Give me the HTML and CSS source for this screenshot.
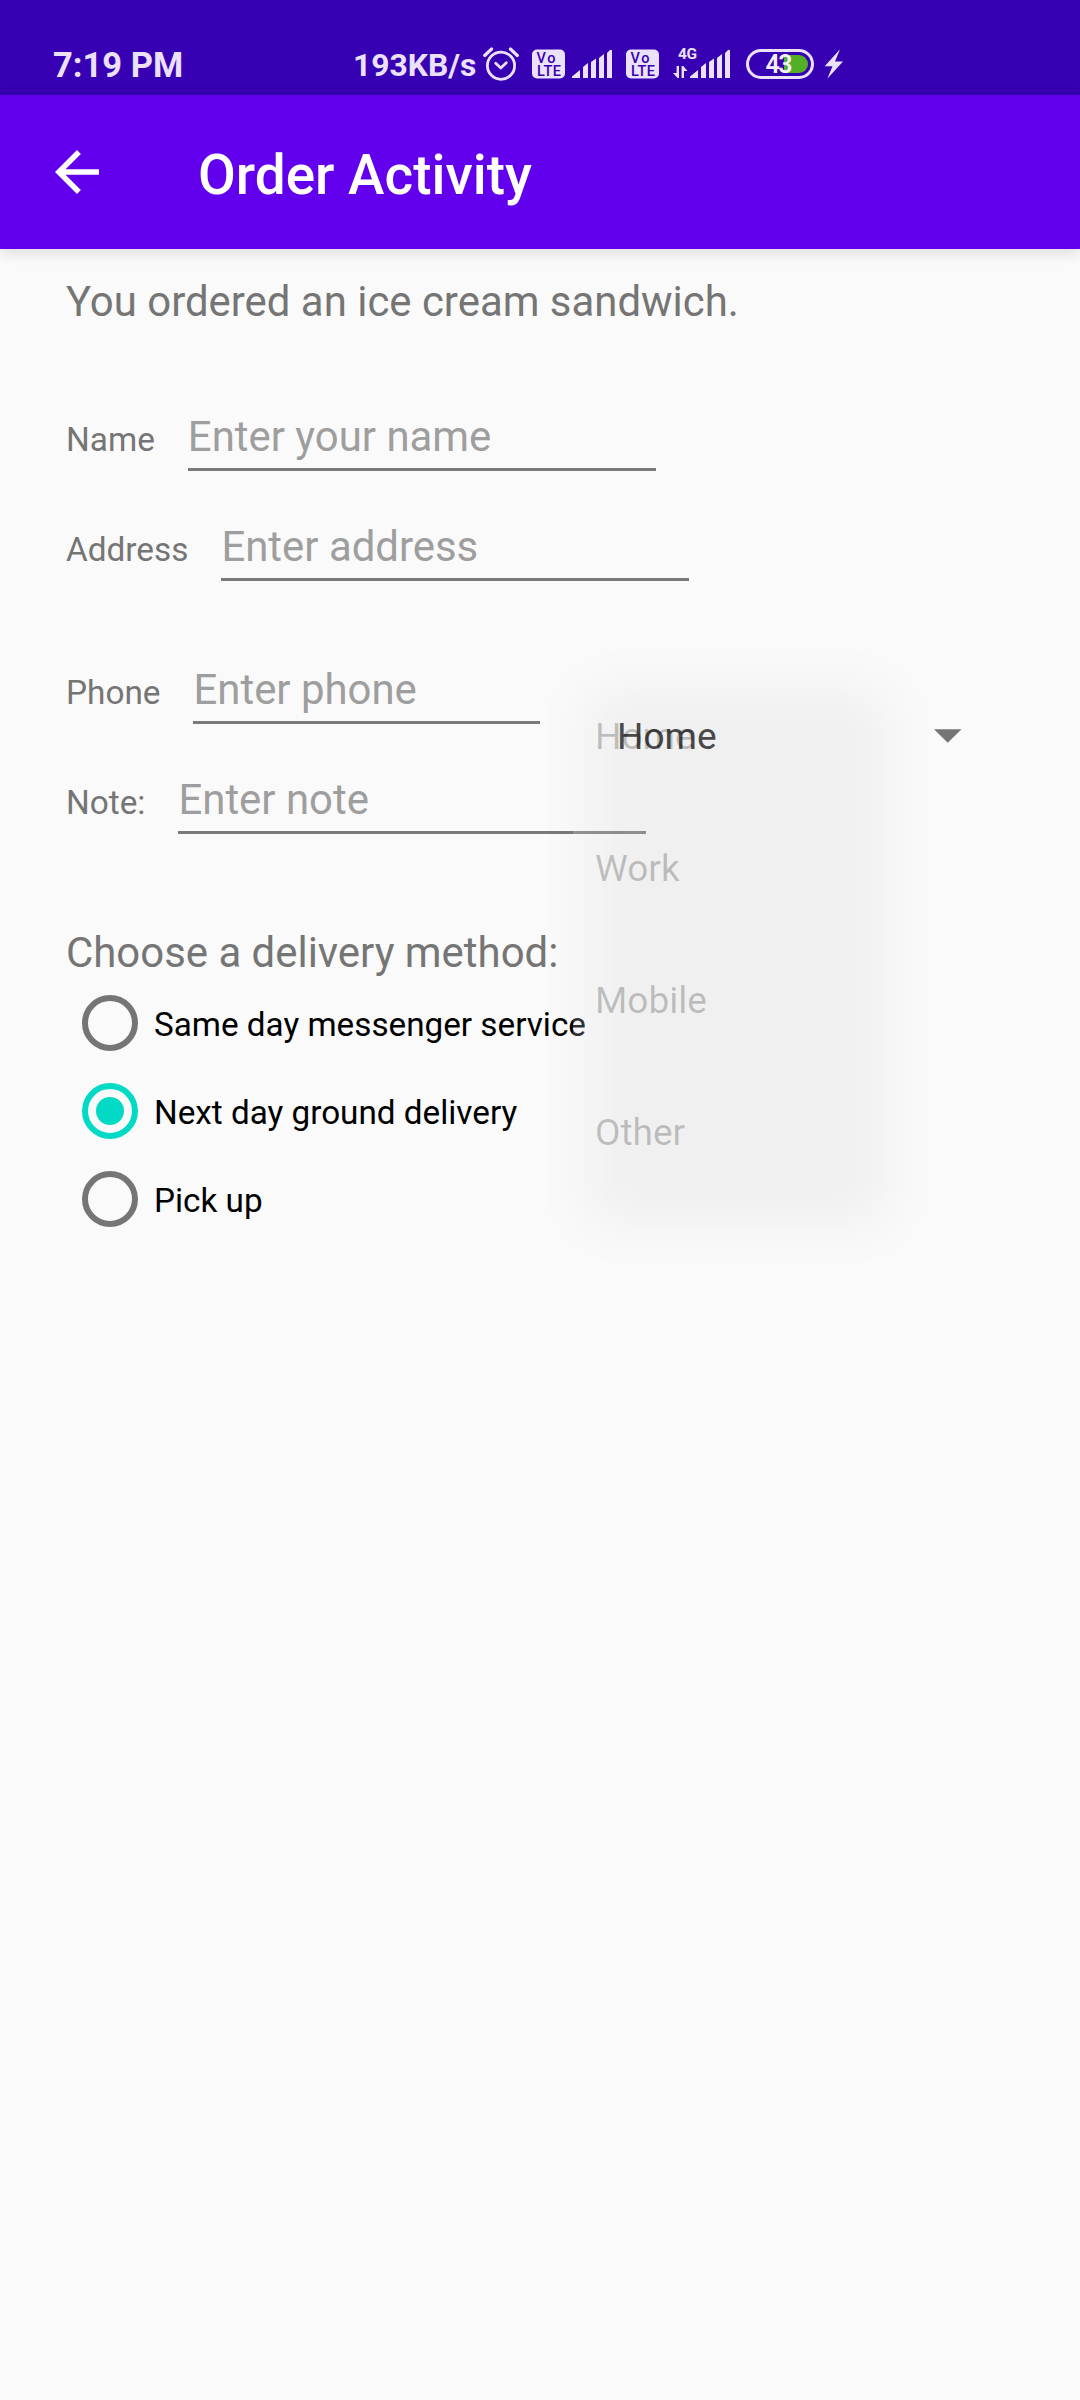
FILE: index.html
```
<!DOCTYPE html>
<html lang="en">
<head>
<meta charset="utf-8">
<title>Order Activity</title>
<link rel="stylesheet" href="styles.css">
</head>
<body>
<header class="status">
  <span class="clock">7:19 PM</span>
  <span class="speed">193KB/s</span>
  <svg class="alarm" width="36" height="36" viewBox="0 0 36 36" fill="none" stroke="currentColor" stroke-width="2.8" stroke-linecap="round" stroke-linejoin="round"><circle cx="18" cy="20.7" r="13.6"/><path d="M1.7 10.5L8.6 4M27.4 4L34.3 10.5" stroke-width="3.2"/><path d="M12.7 18.3L17.8 23L23.3 17.8"/></svg>
  <svg class="volte" width="34" height="30" viewBox="0 0 34 30"><rect width="33" height="29" y=".5" rx="5"/><text x="4.5" y="13.5" textLength="19">Vo</text><text x="5" y="26.5" textLength="24">LTE</text></svg>
  <svg class="signal first" width="41" height="30" viewBox="0 0 41 30"><path d="M0 29V27.5L8 21V29ZM11 29V18L16 14V29ZM19 29V13L24 9.5V29ZM27 29V9L32 5V29ZM35 29V4L38 1Q40 0 40 2V29Z"/></svg>
  <svg class="volte" width="34" height="30" viewBox="0 0 34 30"><rect width="33" height="29" y=".5" rx="5"/><text x="4.5" y="13.5" textLength="19">Vo</text><text x="5" y="26.5" textLength="24">LTE</text></svg>
  <svg class="signal data" width="58" height="33" viewBox="0 0 58 33"><text x="5" y="13" textLength="19">4G</text><path d="M3.6 20H6V32H4.5L0 27H3.6ZM8.6 32V20H10.2L14.5 25H11V32Z"/><path transform="translate(17 3)" d="M0 29V27.5L8 21V29ZM11 29V18L16 14V29ZM19 29V13L24 9.5V29ZM27 29V9L32 5V29ZM35 29V4L38 1Q40 0 40 2V29Z"/></svg>
  <svg class="battery" width="68" height="30" viewBox="0 0 68 30"><rect x="1.5" y="1.5" width="65" height="27" rx="13.5" fill="none" stroke="currentColor" stroke-width="3"/><path d="M38 6H53A9 9 0 0 1 53 24H38Z" fill="#52b027"/><text x="19.5" y="23.9" textLength="27">43</text></svg>
  <svg class="bolt" width="20" height="30" viewBox="0 0 20 30"><path d="M16 .3L.7 17.3H8.5L3.3 29.7L19 12.5H11Z"/></svg>
</header>
<div class="appbar">
  <svg class="back" width="66" height="66" viewBox="0 0 24 24"><path d="M20 11H7.83l5.59-5.59L12 4l-8 8 8 8 1.41-1.41L7.83 13H20v-2z"/></svg>
  <h1 class="title">Order Activity</h1>
</div>
<main class="form">
  <p class="heading">You ordered an ice cream sandwich.</p>
  <div class="row name"><span class="label">Name</span><span class="field">Enter your name</span></div>
  <div class="row gap"><span class="label">Address</span><span class="field">Enter address</span></div>
  <div class="contact">
    <div>
      <div class="row"><span class="label">Phone</span><span class="field short">Enter phone</span></div>
      <div class="row gap"><span class="label">Note:</span><span class="field">Enter note</span></div>
    </div>
    <div class="spinner">
      <span>Home</span>
      <svg width="28" height="14" viewBox="0 0 28 14"><path d="M0 .3H27.5L13.75 13.8Z" fill="#757575"/></svg>
      <ul class="popup"><li>Home</li><li>Work</li><li>Mobile</li><li>Other</li></ul>
    </div>
  </div>
  <p class="heading delivery">Choose a delivery method:</p>
  <div class="option"><i class="radio"></i><span>Same day messenger service</span></div>
  <div class="option"><i class="radio on"></i><span>Next day ground delivery</span></div>
  <div class="option"><i class="radio"></i><span>Pick up</span></div>
</main>
</body>
</html>
```
FILE: styles.css
```
* { box-sizing: border-box; }
body {
  margin: 0;
  width: 1080px;
  height: 2400px;
  overflow: hidden;
  background: #fafafa;
  color: #757575;
  font-family: Roboto, sans-serif;
}
svg { display: block; flex: none; }
p, h1, ul { margin: 0; padding: 0; }

.status {
  display: flex;
  align-items: flex-start;
  height: 95px;
  padding: 45px 0 0 53px;
  background: #3700b3;
  color: #ebe1fb;
  fill: currentColor;
  font-weight: 700;
  white-space: nowrap;
}
.clock { width: 300px; font-size: 34.5px; line-height: 41px; }
.speed { width: 130px; font-size: 31.8px; line-height: 41px; }
.volte { margin-top: 4px; }
.volte text { fill: #3700b3; font-size: 14.5px; font-weight: 500; }
.alarm + .volte { margin-left: 13px; }
.first { margin: 4px 13px 0 6px; }
.data { margin: 1px 0 0 13px; }
.data text { font-size: 15.5px; }
.battery { margin: 4px 0 0 15px; }
.battery text { fill: #f5effd; font-size: 25px; font-weight: 600; }
.bolt { margin: 4px 0 0 10px; }

.appbar {
  display: flex;
  align-items: center;
  height: 154px;
  padding-left: 44px;
  background: #6200ee;
  color: #fff;
  box-shadow: 0 3px 14px rgba(0, 0, 0, .14);
}
.back { fill: currentColor; }
.title {
  margin-left: 88px;
  padding-top: 6px;
  font-size: 54.9px;
  font-weight: 500;
  line-height: 64px;
}

.form { padding: 28px 66px 0; }
.heading { font-size: 41.92px; line-height: 50px; }
.row { display: flex; align-items: baseline; height: 59px; }
.name { margin-top: 85px; }
.gap { margin-top: 51px; }
.label { font-size: 33.33px; line-height: 40px; white-space: nowrap; }
.field {
  flex: none;
  width: 468px;
  height: 59px;
  margin-left: 33px;
  padding-bottom: 6px;
  border-bottom: 3px solid #7a7a7a;
  color: #9e9e9e;
  font-size: 41.92px;
  line-height: 50px;
}
.short { width: 347px; }

.contact {
  display: grid;
  grid-template-columns: 551px 345px;
  align-items: start;
  margin-top: 84px;
}
.spinner {
  position: relative;
  display: flex;
  align-items: center;
  justify-content: space-between;
  height: 66px;
  margin-top: 38px;
  color: #212121;
  font-size: 37px;
  line-height: 44px;
}
.spinner > span { padding-top: 2px; }
.popup {
  position: absolute;
  z-index: 2;
  left: -44px;
  top: -33px;
  width: 312px;
  height: 529px;
  padding-top: 1px;
  background: rgba(250, 250, 250, .2);
  color: rgba(0, 0, 0, .22);
  list-style: none;
}
.popup::before {
  content: "";
  position: absolute;
  z-index: -1;
  inset: 18px -2px -26px 14px;
  border-radius: 20px;
  background: rgba(0, 0, 0, .039);
  filter: blur(25px);
}
.popup li { height: 132px; padding-left: 22px; line-height: 132px; }

.delivery { margin-top: 94px; }
.option {
  display: flex;
  align-items: center;
  height: 88px;
  padding-left: 16px;
  color: #000;
  font-size: 33.25px;
  line-height: 40px;
}
.delivery + .option { margin-top: 1px; }
.option span { padding-top: 3px; }
.radio {
  display: grid;
  place-items: center;
  width: 56px;
  height: 56px;
  margin-right: 16px;
  border: 6px solid #757575;
  border-radius: 50%;
}
.on { border-color: #03dac5; }
.on::after {
  content: "";
  width: 28px;
  height: 28px;
  border-radius: 50%;
  background: #03dac5;
}
```
